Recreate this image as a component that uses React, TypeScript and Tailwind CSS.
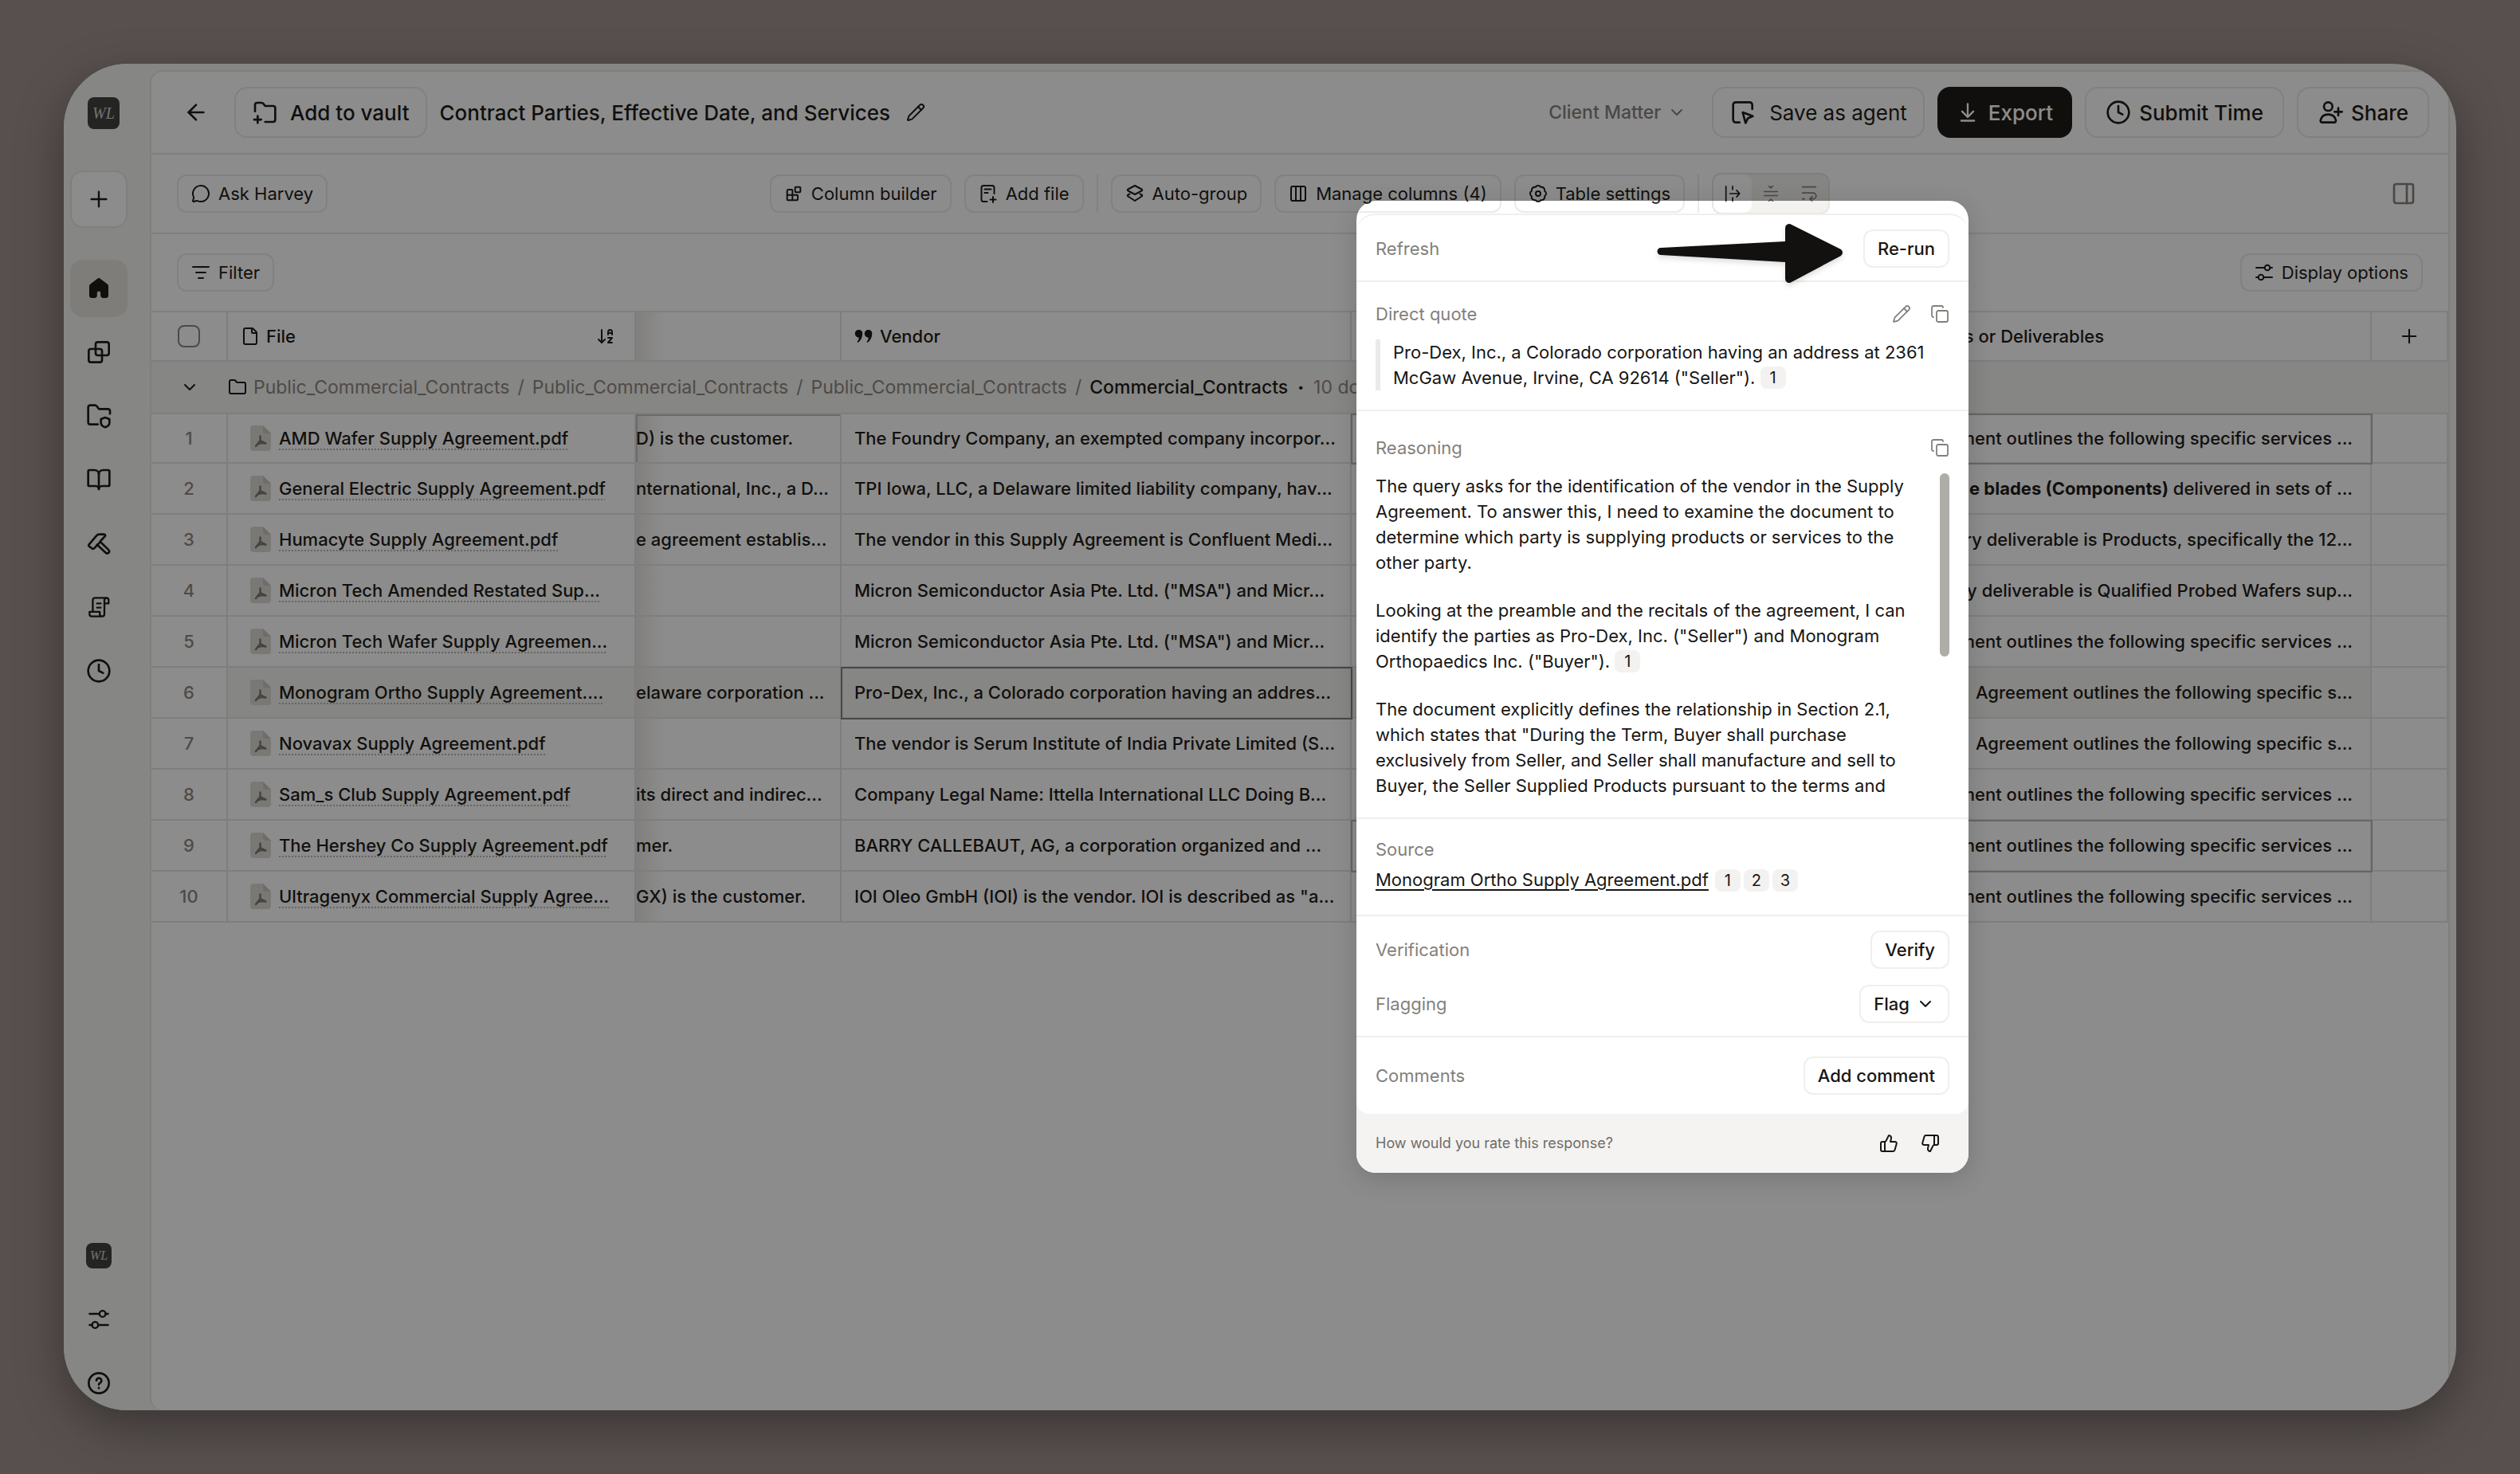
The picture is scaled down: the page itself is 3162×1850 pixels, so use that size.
import type { ReactNode } from 'react';
import {
  ArrowDownAZ,
  ArrowDownToLine,
  ArrowLeft,
  Blocks,
  BookOpen,
  ChevronDown,
  Clock,
  Columns3,
  Copy,
  File,
  Folder,
  ListFilter,
  MessageCircle,
  PanelRight,
  Pencil,
  Plus,
  ThumbsDown,
  ThumbsUp,
} from 'lucide-react';
import { clsx } from 'clsx';

interface GlyphProps {
  className?: string;
  children: ReactNode;
}

function Glyph({ className, children }: GlyphProps) {
  return (
    <svg
      viewBox="0 0 24 24"
      fill="none"
      stroke="currentColor"
      strokeWidth="2"
      strokeLinecap="round"
      strokeLinejoin="round"
      aria-hidden="true"
      className={clsx('shrink-0', className)}
    >
      {children}
    </svg>
  );
}

const HomeGlyph = () => (
  <Glyph className="size-7">
    <path
      fill="currentColor"
      strokeWidth="1"
      d="M10.8 1.9a2 2 0 0 1 2.4 0l7.6 5.8a2.6 2.6 0 0 1 1 2.1v9.7a2.2 2.2 0 0 1-2.2 2.2h-3a2.2 2.2 0 0 1-2.2-2.2V17a2.4 2.4 0 0 0-4.8 0v2.5a2.2 2.2 0 0 1-2.2 2.2h-3a2.2 2.2 0 0 1-2.2-2.2V9.8a2.6 2.6 0 0 1 1-2.1z"
    />
  </Glyph>
);

const OverlapGlyph = () => (
  <Glyph className="size-8">
    <rect x="9" y="2.5" width="12.5" height="12.5" rx="2" />
    <rect x="2.5" y="9" width="12.5" height="12.5" rx="2" />
  </Glyph>
);

const FolderShieldGlyph = () => (
  <Glyph className="size-8">
    <path d="M11 20H4a2 2 0 0 1-2-2V4a2 2 0 0 1 2-2h4.5a2 2 0 0 1 1.6.8L12 5.5h8.5a2 2 0 0 1 2 2V10" />
    <path d="M18 13.5l4 1.5v3.5c0 2-1.5 3.3-4 4.2-2.5-.9-4-2.2-4-4.2V15z" />
  </Glyph>
);

const HammerGlyph = () => (
  <Glyph className="size-8">
    <path d="M2.6 13.3 9.8 4.8A3.5 3.5 0 0 1 12.5 3.5h4.3c1.2 0 1.7 1 .9 1.9l-3 3.2c-.5.6-1.2 1-1.2 1.8L7.7 16.6c-.7.7-1.6.7-2.3 0l-2.7-2c-.4-.4-.4-.9-.1-1.3z" />
    <path d="m13.2 10.3 8 7.8a1.9 1.9 0 0 1-2.7 2.7l-8.2-7.6" />
  </Glyph>
);

const ScrollGlyph = () => (
  <Glyph className="size-7">
    <path d="M5.5 16.5v-12A2.5 2.5 0 0 1 8 2h12a2.5 2.5 0 0 1 2.5 2.5V8H18V4.5A2.5 2.5 0 0 1 20.5 2" />
    <path d="M18 8v11.5a2.5 2.5 0 0 1-2.5 2.5h-11A2.5 2.5 0 0 1 2 19.5V17h11v2.5a2.5 2.5 0 0 0 2.5 2.5M10 8h4M10 12.5h4" />
  </Glyph>
);

const SlidersGlyph = ({ className }: { className: string }) => (
  <Glyph className={className}>
    <path d="M2 6h11M19 6h3M2 18h3M11 18h11" />
    <circle cx="16" cy="6" r="3.3" />
    <circle cx="8" cy="18" r="3.3" />
  </Glyph>
);

const HelpGlyph = () => (
  <Glyph className="size-8">
    <circle cx="12" cy="12" r="9.5" />
    <path d="M9.7 9.5a2.4 2.4 0 1 1 3.6 2.2c-.9.5-1.3 1-1.3 1.7M12 16.4v.2" />
  </Glyph>
);

const FolderAddGlyph = () => (
  <Glyph className="size-8">
    <path d="M3 11V5a2 2 0 0 1 2-2h4.2a2 2 0 0 1 1.6.8L12.5 6H20a2 2 0 0 1 2 2v11a2 2 0 0 1-2 2h-7.5" />
    <path d="M5.5 15.500V22M2.2 18.8h6.6" />
  </Glyph>
);

const AgentGlyph = () => (
  <Glyph className="size-8">
    <path d="M9.5 21.5H6a2.5 2.5 0 0 1-2.5-2.5V5A2.5 2.5 0 0 1 6 2.5h13A2.5 2.5 0 0 1 21.5 5v4" />
    <path d="m12.5 12 9.5 3.6-4.6 2-2.2 4.4z" />
  </Glyph>
);

const PersonAddGlyph = () => (
  <Glyph className="size-8">
    <circle cx="10" cy="6.5" r="4" />
    <path d="M10 14c-4 0-6.5 2.500-7.2 5.500-.2 1 .5 2 1.600 2h11.200c1.100 0 1.800-1 1.600-2C16.500 16.500 14 14 10 14zM19.500 8v7M16 11.500h7" />
  </Glyph>
);

const FileAddGlyph = () => (
  <Glyph className="size-6">
    <path d="M10.500 22H6a2.500 2.500 0 0 1-2.500-2.500v-15A2.500 2.500 0 0 1 6 2h11a2.500 2.500 0 0 1 2.500 2.500V12M7.500 6.500h8M7.500 11h4M18 16v7M14.500 19.500h7" />
  </Glyph>
);

const LayersGlyph = () => (
  <Glyph className="size-6">
    <path d="m12 2 8.500 4.500c1 .5 1 1.500 0 2L12 13 3.500 8.500c-1-.5-1-1.500 0-2z" />
    <path d="m5.500 12.500-2 1c-1 .5-1 1.500 0 2L12 21l8.500-5.500c1-.5 1-1.500 0-2l-2-1" />
  </Glyph>
);

const GearGlyph = () => (
  <Glyph className="size-6">
    <path d="M3.85 8.62a4 4 0 0 1 4.78-4.77 4 4 0 0 1 6.74 0 4 4 0 0 1 4.78 4.78 4 4 0 0 1 0 6.74 4 4 0 0 1-4.77 4.78 4 4 0 0 1-6.75 0 4 4 0 0 1-4.78-4.77 4 4 0 0 1 0-6.76Z" />
    <circle cx="12" cy="12" r="3" />
  </Glyph>
);

const QuoteGlyph = () => (
  <svg viewBox="0 0 24 20" fill="currentColor" aria-hidden="true" className="h-5 w-6 shrink-0">
    <path d="M5.500 2a4.500 4.500 0 0 1 4.700 4.800c0 5-2.400 9-5.600 11.200l-1.200-1c1.500-1.700 2.300-3.600 2.400-5.600A4.700 4.700 0 0 1 5.500 2z" />
    <circle cx="5.5" cy="6.7" r="4.7" />
    <path d="M17.500 2a4.500 4.500 0 0 1 4.700 4.800c0 5-2.400 9-5.600 11.200l-1.200-1c1.500-1.700 2.300-3.600 2.400-5.600A4.700 4.700 0 0 1 17.500 2z" />
    <circle cx="17.5" cy="6.7" r="4.7" />
  </svg>
);

const PdfGlyph = () => (
  <svg viewBox="0 0 26 32" aria-hidden="true" className="h-8 w-[26px] shrink-0">
    <path d="M4 0h12l10 10v18a4 4 0 0 1-4 4H4a4 4 0 0 1-4-4V4a4 4 0 0 1 4-4z" fill="#dddbd6" />
    <path d="M16 0v7a3 3 0 0 0 3 3h7z" fill="#c9c7c2" />
    <path
      d="M12.5 13.5V19L7 26M12.500 19l7 3.500M9.500 23.500c3-1.500 6-2 10-1"
      fill="none"
      stroke="#7d7874"
      strokeWidth="2.4"
      strokeLinecap="round"
      strokeLinejoin="round"
    />
  </svg>
);

function Monogram({ small }: { small?: boolean }) {
  return (
    <span
      className={clsx(
        "flex items-center justify-center rounded-lg bg-[#434240] font-['Liberation_Serif',serif] text-[#d6d2cb] italic",
        small ? 'size-8 text-base' : 'size-10 text-xl'
      )}
    >
      WL
    </span>
  );
}

function NavItem({ label, active, children }: { label: string; active?: boolean; children: ReactNode }) {
  return (
    <a
      href="#"
      aria-label={label}
      className={clsx('flex size-18 items-center justify-center rounded-2xl', active && 'bg-[#e6e4de]')}
    >
      {children}
    </a>
  );
}

function Sidebar() {
  return (
    <nav className="flex w-[108px] shrink-0 flex-col items-start bg-[#f5f4f0] pt-[42px] pl-2">
      <div className="ml-[22px]">
        <Monogram />
      </div>
      <button
        aria-label="New"
        className="mt-[52px] mb-10 flex size-18 items-center justify-center rounded-2xl border-2 border-[#e9e8e4] bg-white"
      >
        <Plus className="size-8" strokeWidth={1.8} />
      </button>
      <div className="flex flex-col gap-2">
        <NavItem label="Home" active>
          <HomeGlyph />
        </NavItem>
        <NavItem label="Spaces">
          <OverlapGlyph />
        </NavItem>
        <NavItem label="Vault">
          <FolderShieldGlyph />
        </NavItem>
        <NavItem label="Library">
          <BookOpen className="size-8" />
        </NavItem>
        <NavItem label="Workflows">
          <HammerGlyph />
        </NavItem>
        <NavItem label="Guidance">
          <ScrollGlyph />
        </NavItem>
        <NavItem label="History">
          <Clock className="size-8" />
        </NavItem>
      </div>
      <div className="mt-auto -mb-0.5 flex flex-col gap-2">
        <NavItem label="Workspace">
          <Monogram small />
        </NavItem>
        <NavItem label="Settings">
          <SlidersGlyph className="size-7" />
        </NavItem>
        <NavItem label="Help">
          <HelpGlyph />
        </NavItem>
      </div>
    </nav>
  );
}

const headerButton = 'flex h-16 items-center rounded-2xl border-2 border-[#e9e9e6] bg-white';

function Header() {
  return (
    <header className="flex h-[104px] items-center border-b-2 border-[#e7e7e4] pr-6 pl-10 text-[26px] font-medium">
      <button aria-label="Back">
        <ArrowLeft className="size-8" />
      </button>
      <button className={clsx(headerButton, 'ml-8 gap-4 px-5')}>
        <FolderAddGlyph />
        Add to vault
      </button>
      <h1 className="ml-4">Contract Parties, Effective Date, and Services</h1>
      <button aria-label="Rename" className="ml-5">
        <Pencil className="size-6" />
      </button>
      <button className="mr-8 ml-auto flex items-center gap-2 text-[23px] text-[#8a827f]">
        Client Matter
        <ChevronDown className="size-6" />
      </button>
      <div className="flex gap-4">
        <button className={clsx(headerButton, 'gap-[18px] px-5 font-normal')}>
          <AgentGlyph />
          Save as agent
        </button>
        <button className="flex h-16 items-center gap-3 rounded-2xl bg-[#1f1d19] px-6 text-white">
          <ArrowDownToLine className="size-7" />
          Export
        </button>
        <button className={clsx(headerButton, 'gap-2.5 px-6')}>
          <Clock className="size-8" />
          Submit Time
        </button>
        <button className={clsx(headerButton, 'gap-2.5 px-6')}>
          <PersonAddGlyph />
          Share
        </button>
      </div>
    </header>
  );
}

function ToolButton({ icon, children }: { icon: ReactNode; children: ReactNode }) {
  return (
    <button className="flex h-12 items-center gap-2.5 rounded-xl border-2 border-[#ebebe8] px-4 text-[22px]">
      {icon}
      {children}
    </button>
  );
}

const Divider = () => <div className="h-12 w-0.5 bg-[#ebebe8]" />;

function Toolbar() {
  return (
    <div className="grid h-[100px] grid-cols-[1fr_auto_1fr] items-center border-b-2 border-[#e7e7e4] px-8">
      <div className="flex">
        <ToolButton icon={<MessageCircle className="size-6" />}>Ask Harvey</ToolButton>
      </div>
      <div className="flex items-center gap-4">
        <ToolButton icon={<Blocks className="mx-0.5 size-5" strokeWidth={2.4} />}>Column builder</ToolButton>
        <ToolButton icon={<FileAddGlyph />}>Add file</ToolButton>
        <Divider />
        <ToolButton icon={<LayersGlyph />}>Auto-group</ToolButton>
        <ToolButton icon={<Columns3 className="size-6" />}>Manage columns (4)</ToolButton>
        <ToolButton icon={<GearGlyph />}>Table settings</ToolButton>
        <Divider />
        <div className="flex h-13 rounded-xl border-2 border-[#e7e6e3] bg-[#f3f2ef] text-[#8a827f]">
          <button
            aria-label="Fit"
            className="flex w-12 items-center justify-center rounded-[10px] bg-white text-[#1f1d19]"
          >
            <Glyph className="size-5">
              <path d="M2 1v22M12 1v5M12 18v5M8 12h14M18 7l4.500 5-4.500 5" />
            </Glyph>
          </button>
          <button aria-label="Compact" className="flex w-12 items-center justify-center">
            <Glyph className="size-5">
              <path d="M2 9h20M2 15h20M8.500 0 12 3.500 15.500 0M8.500 24l3.500-3.500 3.500 3.500" />
            </Glyph>
          </button>
          <button aria-label="Wrap" className="flex w-12 items-center justify-center">
            <Glyph className="size-5">
              <path d="M2 2h20M2 11h16a4.500 4.500 0 0 1 0 9h-5M17 16l-4 4 4 4M2 20h3" />
            </Glyph>
          </button>
        </div>
      </div>
      <button aria-label="Toggle panel" className="mr-2 ml-auto text-[#8a827f]">
        <PanelRight className="size-8" />
      </button>
    </div>
  );
}

interface RowData {
  file: string;
  customer: string;
  vendor: string;
  services: ReactNode;
}

const OUTLINES = 'Agreement outlines the following specific services ...';

const rows: RowData[] = [
  {
    file: 'AMD Wafer Supply Agreement.pdf',
    customer: 'D) is the customer.',
    vendor: 'The Foundry Company, an exempted company incorpor...',
    services: OUTLINES,
  },
  {
    file: 'General Electric Supply Agreement.pdf',
    customer: 'nternational, Inc., a D...',
    vendor: 'TPI Iowa, LLC, a Delaware limited liability company, hav...',
    services: (
      <>
        <b>wind turbine blades (Components)</b> delivered in sets of ...
      </>
    ),
  },
  {
    file: 'Humacyte Supply Agreement.pdf',
    customer: 'e agreement establis...',
    vendor: 'The vendor in this Supply Agreement is Confluent Medi...',
    services: 'The primary deliverable is Products, specifically the 12...',
  },
  {
    file: 'Micron Tech Amended Restated Sup...',
    customer: '',
    vendor: 'Micron Semiconductor Asia Pte. Ltd. ("MSA") and Micr...',
    services: 'The primary deliverable is Qualified Probed Wafers sup...',
  },
  {
    file: 'Micron Tech Wafer Supply Agreemen...',
    customer: '',
    vendor: 'Micron Semiconductor Asia Pte. Ltd. ("MSA") and Micr...',
    services: OUTLINES,
  },
  {
    file: 'Monogram Ortho Supply Agreement....',
    customer: 'elaware corporation ...',
    vendor: 'Pro-Dex, Inc., a Colorado corporation having an addres...',
    services: 'Agreement outlines the following specific s...',
  },
  {
    file: 'Novavax Supply Agreement.pdf',
    customer: '',
    vendor: 'The vendor is Serum Institute of India Private Limited (S...',
    services: 'Agreement outlines the following specific s...',
  },
  {
    file: 'Sam_s Club Supply Agreement.pdf',
    customer: 'its direct and indirec...',
    vendor: 'Company Legal Name: Ittella International LLC Doing B...',
    services: OUTLINES,
  },
  {
    file: 'The Hershey Co Supply Agreement.pdf',
    customer: 'mer.',
    vendor: 'BARRY CALLEBAUT, AG, a corporation organized and ...',
    services: OUTLINES,
  },
  {
    file: 'Ultragenyx Commercial Supply Agree...',
    customer: 'GX) is the customer.',
    vendor: 'IOI Oleo GmbH (IOI) is the vendor. IOI is described as "a...',
    services: OUTLINES,
  },
];

const SELECTED = 5;
const cell = 'border-r-2 border-b-2 border-[#e7e6e3] p-0 overflow-hidden whitespace-nowrap text-left font-medium';
// shade thrown by the pinned file column
const shade = 'bg-[linear-gradient(to_right,#ebe9e5,transparent_36px)]';

function Crumb({ children }: { children: ReactNode }) {
  return (
    <>
      <span className="text-[#8f8884]">{children}</span>
      <span className="text-[#8f8884]">/</span>
    </>
  );
}

function ContractTable() {
  return (
    <table className="w-full table-fixed border-separate border-spacing-0 text-[22px]">
      <colgroup>
        <col className="w-24" />
        <col className="w-[512px]" />
        <col className="w-[258px]" />
        <col className="w-[640px]" />
        <col />
        <col className="w-24" />
      </colgroup>
      <thead>
        <tr className="h-[62px]">
          <th className={cell}>
            <div className="flex justify-center">
              <input
                type="checkbox"
                aria-label="Select all files"
                className="size-7 appearance-none rounded-lg border-2 border-[#8f8683]"
              />
            </div>
          </th>
          <th className={cell}>
            <div className="flex items-center gap-2 pr-6 pl-4">
              <File className="size-6" />
              File
              <ArrowDownAZ className="ml-auto size-6" />
            </div>
          </th>
          <th aria-label="Customer" className={clsx(cell, shade)} />
          <th className={cell}>
            <div className="flex items-center gap-2 pl-4">
              <QuoteGlyph />
              Vendor
            </div>
          </th>
          <th className={cell}>
            <div className="flex justify-end pr-[334px]">Services or Deliverables</div>
          </th>
          <th className={cell}>
            <button aria-label="Add column" className="mx-auto block">
              <Plus className="size-7" strokeWidth={1.8} />
            </button>
          </th>
        </tr>
      </thead>
      <tbody>
        <tr className="h-[66px] bg-[#f5f4f0]">
          <td colSpan={6} className="border-b-2 border-[#e7e6e3] p-0">
            <div className="flex items-center text-[23px] whitespace-nowrap">
              <button aria-label="Collapse group" className="flex w-24 justify-center">
                <ChevronDown className="size-6" />
              </button>
              <Folder className="mr-2 size-6" />
              <div className="flex gap-2.5">
                <Crumb>Public_Commercial_Contracts</Crumb>
                <Crumb>Public_Commercial_Contracts</Crumb>
                <Crumb>Public_Commercial_Contracts</Crumb>
                <span className="font-medium">Commercial_Contracts</span>
              </div>
              <span className="mx-3 text-sm">•</span>
              <span className="text-[#8f8884]">10 documents</span>
            </div>
          </td>
        </tr>
        {rows.map((row, i) => {
          const active = i === SELECTED;
          const tint = active && 'bg-[#f5f4f0]';
          return (
            <tr key={row.file} className={i === 0 ? 'h-[62px]' : 'h-16'}>
              <td className={clsx(cell, 'text-center! text-[#8f8884]')}>{i + 1}</td>
              <td className={clsx(cell, tint)}>
                <div className="flex items-center gap-2.5 pl-7">
                  <PdfGlyph />
                  <a
                    href="#"
                    className="underline decoration-[#b9b6b1] decoration-dotted decoration-2 underline-offset-6"
                  >
                    {row.file}
                  </a>
                </div>
              </td>
              <td className={clsx(cell, shade, tint, i === 0 && 'shadow-[inset_2px_2px_0_0_#c4c2be]')}>
                {row.customer}
              </td>
              <td className={clsx(cell, 'pl-4', tint, active && 'outline-2 -outline-offset-1 outline-[#87827d]')}>
                {row.vendor}
              </td>
              <td
                className={clsx(
                  cell,
                  tint,
                  (i === 0 || i === 8) && 'outline-2 -outline-offset-1 outline-[#bdbbb7]'
                )}
              >
                <div className="flex justify-end pr-[22px]">
                  <span>{row.services}</span>
                </div>
              </td>
              <td className={cell} />
            </tr>
          );
        })}
      </tbody>
    </table>
  );
}

function Badge({ children }: { children: ReactNode }) {
  return (
    <button className="mt-0.5 inline-flex h-7 w-8 items-center justify-center rounded-lg bg-[#f3f2f0] align-top text-xl leading-6">
      {children}
    </button>
  );
}

function PanelButton({ children }: { children: ReactNode }) {
  return (
    <button className="flex h-12 items-center gap-2 rounded-xl border-2 border-[#f0efed] px-4 font-medium">
      {children}
    </button>
  );
}

function CellDetails() {
  const label = 'text-[#83807c]';
  const rule = 'border-b-2 border-[#f0efed]';
  return (
    <div className="rounded-t-3xl bg-[#f4f3f1] text-[22px] leading-8 text-[#171614]">
      <div className="rounded-t-3xl rounded-b-2xl border-t-2 border-[#f0efed] bg-white">
        <section className={clsx('flex items-center justify-between px-6 pt-[18px] pb-4', rule)}>
          <h2 className={label}>Refresh</h2>
          <PanelButton>Re-run</PanelButton>
        </section>

        <section className={clsx('px-6 py-6', rule)}>
          <div className="mb-4 flex items-center gap-6 text-[#83807c]">
            <h2 className="mr-auto">Direct quote</h2>
            <button aria-label="Edit quote">
              <Pencil className="size-6" strokeWidth={1.8} />
            </button>
            <button aria-label="Copy quote">
              <Copy className="size-6" strokeWidth={1.8} />
            </button>
          </div>
          <blockquote className="border-l-6 border-[#ebeae8] pl-4">
            Pro-Dex, Inc., a Colorado corporation having an address at 2361 McGaw Avenue, Irvine, CA 92614
            ("Seller"). <Badge>1</Badge>
          </blockquote>
        </section>

        <section className={clsx('px-6 pt-[30px] pb-6', rule)}>
          <div className="mb-4 flex items-center justify-between text-[#83807c]">
            <h2>Reasoning</h2>
            <button aria-label="Copy reasoning">
              <Copy className="size-6" strokeWidth={1.8} />
            </button>
          </div>
          <div className="flex h-[408px] justify-between overflow-hidden">
            <div className="flex w-[686px] flex-col gap-7">
              <p>
                The query asks for the identification of the vendor in the Supply Agreement. To answer this, I need
                to examine the document to determine which party is supplying products or services to the other
                party.
              </p>
              <p>
                Looking at the preamble and the recitals of the agreement, I can identify the parties as Pro-Dex,
                Inc. ("Seller") and Monogram Orthopaedics Inc. ("Buyer"). <Badge>1</Badge>
              </p>
              <p>
                The document explicitly defines the relationship in Section 2.1, which states that "During the Term,
                Buyer shall purchase exclusively from Seller, and Seller shall manufacture and sell to Buyer, the
                Seller Supplied Products pursuant to the terms and
              </p>
            </div>
            <div className="h-[230px] w-3 rounded-full bg-[#aeada8]" />
          </div>
        </section>

        <section className={clsx('px-6 pt-[22px] pb-7', rule)}>
          <h2 className={label}>Source</h2>
          <div className="mt-1.5 flex items-center gap-1">
            <a href="#" className="mr-1 underline decoration-2 underline-offset-4">
              Monogram Ortho Supply Agreement.pdf
            </a>
            <Badge>1</Badge>
            <Badge>2</Badge>
            <Badge>3</Badge>
          </div>
        </section>

        <section className={clsx('flex flex-col gap-5 px-6 pt-[18px] pb-4', rule)}>
          <div className="flex items-center justify-between">
            <h2 className={label}>Verification</h2>
            <PanelButton>Verify</PanelButton>
          </div>
          <div className="flex items-center justify-between">
            <h2 className={label}>Flagging</h2>
            <PanelButton>
              Flag
              <ChevronDown className="size-6" />
            </PanelButton>
          </div>
        </section>

        <section className="flex items-center justify-between px-6 py-6">
          <h2 className={label}>Comments</h2>
          <PanelButton>Add comment</PanelButton>
        </section>
      </div>

      <footer className="flex h-[74px] items-center gap-7 px-6 text-lg text-[#6f6c68]">
        <span className="mr-auto">How would you rate this response?</span>
        <button aria-label="Good response" className="text-[#171614]">
          <ThumbsUp className="size-6" />
        </button>
        <button aria-label="Bad response" className="mr-3 text-[#171614]">
          <ThumbsDown className="size-6" />
        </button>
      </footer>
    </div>
  );
}

export default function App() {
  return (
    <div className="relative flex min-h-screen overflow-hidden bg-[#a09290] p-20 font-['Inter','Liberation_Sans',sans-serif] text-[#1f1d19]">
      <div className="flex flex-1 overflow-hidden rounded-[80px] bg-[#f5f4f0] shadow-[0_20px_60px_rgba(0,0,0,0.35)]">
        <Sidebar />
        <main className="mt-2 mr-2 flex min-w-0 flex-1 flex-col overflow-hidden rounded-l-2xl border-t-2 border-r-2 border-l-2 border-[#e9e8e5] bg-white">
          <Header />
          <Toolbar />
          <div className="flex h-[98px] items-center justify-between border-b-2 border-[#e7e7e4] px-8">
            <ToolButton icon={<ListFilter className="size-6" />}>Filter</ToolButton>
            <ToolButton icon={<SlidersGlyph className="size-6" />}>Display options</ToolButton>
          </div>
          <ContractTable />
        </main>
      </div>

      {/* spotlight: everything around the details panel is dimmed by its spread shadow */}
      <div className="absolute top-[252px] left-[1702px] w-[768px] overflow-hidden rounded-3xl pt-4 shadow-[0_8px_32px_rgba(0,0,0,0.15),0_0_0_4000px_rgba(0,0,0,0.45)]">
        <CellDetails />
        <svg
          viewBox="0 0 244 84"
          aria-hidden="true"
          className="absolute top-6 left-[374px] h-[84px] w-[244px] drop-shadow-[0_4px_3px_rgba(0,0,0,0.12)]"
        >
          <path
            d="M8 35 164 27V10a5 5 0 0 1 8-4l62 31a5 5 0 0 1 0 8l-62 33a5 5 0 0 1-8-4V53L8 44a4.500 4.500 0 0 1 0-9z"
            fill="#12110f"
          />
        </svg>
      </div>
    </div>
  );
}
